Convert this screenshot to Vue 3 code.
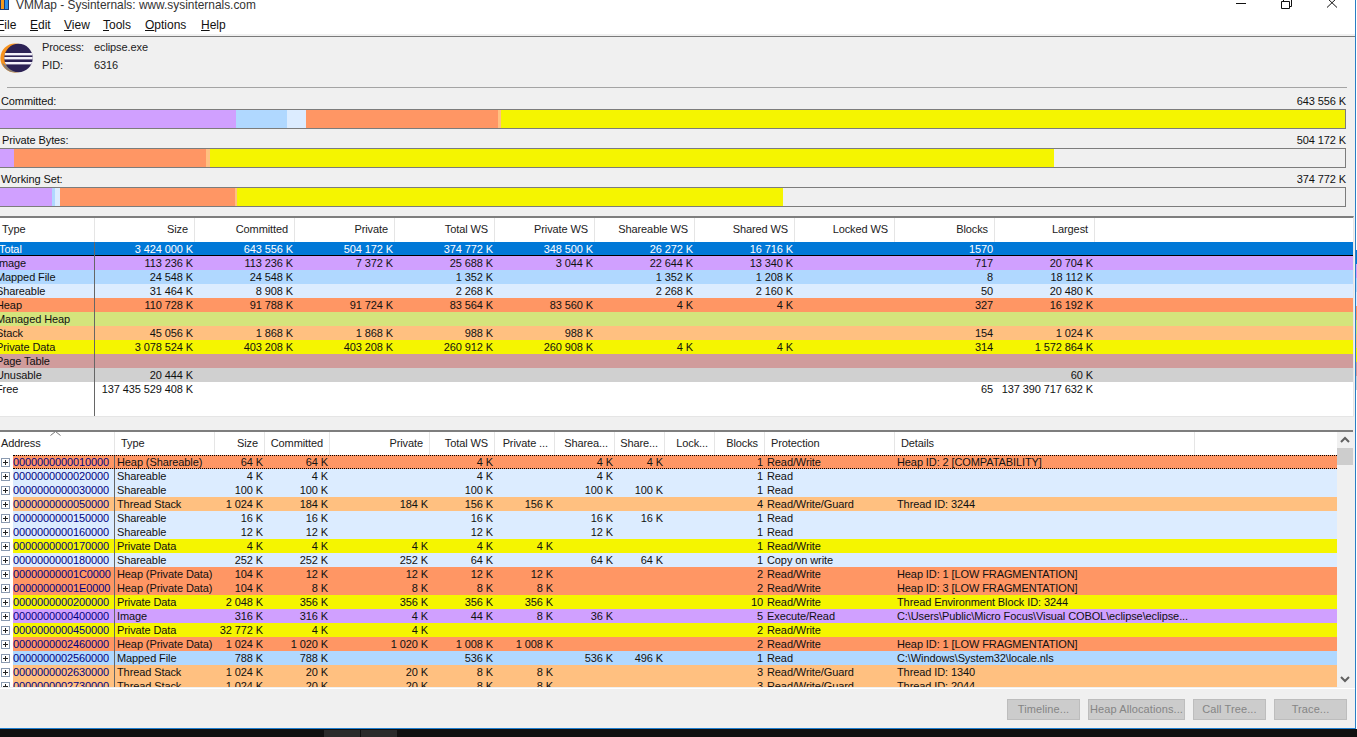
<script setup>
const menus = [
  { key: 'F', rest: 'ile' },
  { key: 'E', rest: 'dit' },
  { key: 'V', rest: 'iew' },
  { key: 'T', rest: 'ools' },
  { key: 'O', rest: 'ptions' },
  { key: 'H', rest: 'elp' },
]

const meters = [
  {
    label: 'Committed:', value: '643 556 K', cls: 'lab-a',
    segs: [['image', 236], ['mapped', 51], ['share', 19], ['heap', 192], ['stack', 3], ['data', 844]],
  },
  {
    label: 'Private Bytes:', value: '504 172 K', cls: 'lab-b',
    segs: [['image', 14], ['heap', 192], ['stack', 4], ['data', 844]],
  },
  {
    label: 'Working Set:', value: '374 772 K', cls: 'lab-a',
    segs: [['image', 52], ['mapped', 3], ['share', 5], ['heap', 175], ['stack', 2], ['data', 546]],
  },
]

const summaryHead = ['Size', 'Committed', 'Private', 'Total WS', 'Private WS', 'Shareable WS', 'Shared WS', 'Locked WS', 'Blocks', 'Largest']

const summary = [
  ['total', 'Total', '3 424 000 K', '643 556 K', '504 172 K', '374 772 K', '348 500 K', '26 272 K', '16 716 K', '', '1570', ''],
  ['image', 'Image', '113 236 K', '113 236 K', '7 372 K', '25 688 K', '3 044 K', '22 644 K', '13 340 K', '', '717', '20 704 K'],
  ['mapped', 'Mapped File', '24 548 K', '24 548 K', '', '1 352 K', '', '1 352 K', '1 208 K', '', '8', '18 112 K'],
  ['share', 'Shareable', '31 464 K', '8 908 K', '', '2 268 K', '', '2 268 K', '2 160 K', '', '50', '20 480 K'],
  ['heap', 'Heap', '110 728 K', '91 788 K', '91 724 K', '83 564 K', '83 560 K', '4 K', '4 K', '', '327', '16 192 K'],
  ['managed', 'Managed Heap', '', '', '', '', '', '', '', '', '', ''],
  ['stack', 'Stack', '45 056 K', '1 868 K', '1 868 K', '988 K', '988 K', '', '', '', '154', '1 024 K'],
  ['data', 'Private Data', '3 078 524 K', '403 208 K', '403 208 K', '260 912 K', '260 908 K', '4 K', '4 K', '', '314', '1 572 864 K'],
  ['pagetable', 'Page Table', '', '', '', '', '', '', '', '', '', ''],
  ['unusable', 'Unusable', '20 444 K', '', '', '', '', '', '', '', '', '60 K'],
  ['free', 'Free', '137 435 529 408 K', '', '', '', '', '', '', '', '65', '137 390 717 632 K'],
]

const detailHead = ['Size', 'Committed', 'Private', 'Total WS', 'Private ...', 'Sharea...', 'Share...', 'Lock...', 'Blocks']

const RW = 'Read/Write'
const RWG = 'Read/Write/Guard'
const LF = '[LOW FRAGMENTATION]'
const details = [
  ['heap', '0000000000010000', 'Heap (Shareable)', '64 K', '64 K', '', '4 K', '', '4 K', '4 K', '', '1', RW, 'Heap ID: 2 [COMPATABILITY]'],
  ['share', '0000000000020000', 'Shareable', '4 K', '4 K', '', '4 K', '', '4 K', '', '', '1', 'Read', ''],
  ['share', '0000000000030000', 'Shareable', '100 K', '100 K', '', '100 K', '', '100 K', '100 K', '', '1', 'Read', ''],
  ['stack', '0000000000050000', 'Thread Stack', '1 024 K', '184 K', '184 K', '156 K', '156 K', '', '', '', '4', RWG, 'Thread ID: 3244'],
  ['share', '0000000000150000', 'Shareable', '16 K', '16 K', '', '16 K', '', '16 K', '16 K', '', '1', 'Read', ''],
  ['share', '0000000000160000', 'Shareable', '12 K', '12 K', '', '12 K', '', '12 K', '', '', '1', 'Read', ''],
  ['data', '0000000000170000', 'Private Data', '4 K', '4 K', '4 K', '4 K', '4 K', '', '', '', '1', RW, ''],
  ['share', '0000000000180000', 'Shareable', '252 K', '252 K', '252 K', '64 K', '', '64 K', '64 K', '', '1', 'Copy on write', ''],
  ['heap', '00000000001C0000', 'Heap (Private Data)', '104 K', '12 K', '12 K', '12 K', '12 K', '', '', '', '2', RW, 'Heap ID: 1 ' + LF],
  ['heap', '00000000001E0000', 'Heap (Private Data)', '104 K', '8 K', '8 K', '8 K', '8 K', '', '', '', '2', RW, 'Heap ID: 3 ' + LF],
  ['data', '0000000000200000', 'Private Data', '2 048 K', '356 K', '356 K', '356 K', '356 K', '', '', '', '10', RW, 'Thread Environment Block ID: 3244'],
  ['image', '0000000000400000', 'Image', '316 K', '316 K', '4 K', '44 K', '8 K', '36 K', '', '', '5', 'Execute/Read', 'C:\\Users\\Public\\Micro Focus\\Visual COBOL\\eclipse\\eclipse...'],
  ['data', '0000000000450000', 'Private Data', '32 772 K', '4 K', '4 K', '', '', '', '', '', '2', RW, ''],
  ['heap', '0000000002460000', 'Heap (Private Data)', '1 024 K', '1 020 K', '1 020 K', '1 008 K', '1 008 K', '', '', '', '2', RW, 'Heap ID: 1 ' + LF],
  ['mapped', '0000000002560000', 'Mapped File', '788 K', '788 K', '', '536 K', '', '536 K', '496 K', '', '1', 'Read', 'C:\\Windows\\System32\\locale.nls'],
  ['stack', '0000000002630000', 'Thread Stack', '1 024 K', '20 K', '20 K', '8 K', '8 K', '', '', '', '3', RWG, 'Thread ID: 1340'],
  ['stack', '0000000002730000', 'Thread Stack', '1 024 K', '20 K', '20 K', '8 K', '8 K', '', '', '', '3', RWG, 'Thread ID: 2044'],
]

const actions = [
  { label: 'Timeline...', cls: 'w73' },
  { label: 'Heap Allocations...', cls: 'w97' },
  { label: 'Call Tree...', cls: 'w73' },
  { label: 'Trace...', cls: 'w73' },
]
</script>

<template>
  <div class="screen">
    <div class="upper">
      <div class="window">
        <header class="titlebar">
          <div class="caption">
            <svg class="app-icon" width="10" height="11" viewBox="0 0 10 11">
              <rect x="0" y="-1" width="9" height="11" fill="#1d3c78" />
              <rect x="1" y="0" width="3" height="9" fill="#f79a1c" />
              <rect x="5" y="0" width="3" height="9" fill="#2f8fe8" />
            </svg>
            <span class="caption-text">VMMap - Sysinternals: www.sysinternals.com</span>
            <div class="controls">
              <svg width="101" height="11" viewBox="0 0 101 11" fill="none" stroke="#111" stroke-width="1">
                <path d="M0 3.5H10" />
                <path d="M45.5 1.5H53.5V8.5H45.5ZM47.5 1.5V-1.5H55.5V6.5H53.5" />
                <path d="M91 -2L101 7.5M101 -2L91 7.5" />
              </svg>
            </div>
          </div>
          <nav class="menubar">
            <span v-for="m in menus" :key="m.key" class="menu-item"><u>{{ m.key }}</u>{{ m.rest }}</span>
          </nav>
        </header>

        <section class="process">
          <svg class="eclipse" width="34" height="30" viewBox="0 0 34 30">
            <defs>
              <clipPath id="globe"><circle cx="18.5" cy="15" r="14.2" /></clipPath>
            </defs>
            <circle cx="15" cy="15" r="14.6" fill="#f6921e" />
            <path d="M2 20A14.6 14.6 0 0 0 15 29.6L18 29Z" fill="#8a8078" />
            <circle cx="18.5" cy="15" r="14.2" fill="#2c2255" />
            <g clip-path="url(#globe)" fill="#f4f2fa">
              <rect x="0" y="10" width="34" height="2.4" />
              <rect x="0" y="14" width="34" height="2.4" />
              <rect x="0" y="19" width="34" height="2.4" />
            </g>
          </svg>
          <div class="proc-grid">
            <span>Process:</span><span>eclipse.exe</span>
            <span>PID:</span><span>6316</span>
          </div>
        </section>
        <div class="divider"></div>

        <section class="meters">
          <div v-for="meter in meters" :key="meter.label" class="meter">
            <div class="meter-head">
              <span :class="meter.cls">{{ meter.label }}</span>
              <span>{{ meter.value }}</span>
            </div>
            <div class="meter-bar">
              <div
                v-for="(s, i) in meter.segs"
                :key="i"
                :class="s[0]"
                :style="{ width: s[1] + 'px' }"
              ></div>
            </div>
          </div>
        </section>

        <section class="summary">
          <div class="sum-grid sum-head">
            <div class="hcell left first">Type</div>
            <div v-for="h in summaryHead" :key="h" class="hcell">{{ h }}</div>
          </div>
          <div v-for="row in summary" :key="row[1]" class="sum-grid sum-row" :class="row[0]">
            <div class="cell first-cell"><span class="clipped">{{ row[1] }}</span></div>
            <div v-for="(v, i) in row.slice(2)" :key="i" class="cell num">{{ v }}</div>
          </div>
          <div class="sum-fill"><div class="sum-fill-line"></div></div>
        </section>

        <div class="splitter"></div>

        <section class="detail">
          <div class="detail-main">
            <div class="det-grid det-head">
              <div class="hcell left addr-head">
                Address
                <svg class="sort" width="11" height="5" viewBox="0 0 11 5" fill="none" stroke="#777"><path d="M.5 4.5L5.5 .5L10.5 4.5" /></svg>
              </div>
              <div class="hcell left pad">Type</div>
              <div v-for="h in detailHead" :key="h" class="hcell">{{ h }}</div>
              <div class="hcell left pad">Protection</div>
              <div class="hcell left pad">Details</div>
            </div>
            <div class="det-rows">
              <div
                v-for="(row, r) in details"
                :key="row[1]"
                class="det-grid det-row"
                :class="[row[0], { focused: r === 0 }]"
              >
                <div class="addr-cell">
                  <div class="gutter">
                    <svg width="9" height="9" viewBox="0 0 9 9" fill="none">
                      <rect x=".5" y=".5" width="8" height="8" stroke="#8a9ab0" fill="#fff" />
                      <path d="M2 4.5H7M4.5 2V7" stroke="#222" />
                    </svg>
                  </div>
                  <span class="addr">{{ row[1] }}</span>
                </div>
                <div class="cell text">{{ row[2] }}</div>
                <div v-for="i in 9" :key="i" class="cell num">{{ row[2 + i] }}</div>
                <div class="cell text">{{ row[12] }}</div>
                <div class="cell text">{{ row[13] }}</div>
              </div>
            </div>
          </div>
          <div class="scrollbar">
            <svg width="16" height="16" viewBox="0 0 16 16" fill="none" stroke="#606060" stroke-width="2"><path d="M4 10L8 6L12 10" /></svg>
            <div class="thumb"></div>
            <div class="track"></div>
            <svg width="16" height="16" viewBox="0 0 16 16" fill="none" stroke="#606060" stroke-width="2"><path d="M4 6L8 10L12 6" /></svg>
          </div>
        </section>

        <footer class="actions">
          <div v-for="a in actions" :key="a.label" class="action" :class="a.cls">{{ a.label }}</div>
        </footer>
      </div>
      <div class="behind"></div>
    </div>
    <div class="taskbar">
      <div class="task-gap"></div>
      <div class="task-btn"></div>
      <div class="task-btn"></div>
    </div>
  </div>
</template>

<style scoped>
.screen {
  width: 1357px;
  height: 737px;
  overflow: hidden;
  display: flex;
  flex-direction: column;
  font-family: "Liberation Sans", Arial, sans-serif;
  font-size: 11px;
  letter-spacing: -0.1px;
  color: #111;
  background: #fff;
}
.upper {
  display: flex;
  height: 729px;
  flex: none;
}
.window {
  width: 1356px;
  height: 729px;
  box-sizing: border-box;
  flex: none;
  background: #f0f0f0;
  border-right: 1px solid #2a7fc4;
  border-bottom: 1px solid #1f7fd0;
  display: flex;
  flex-direction: column;
  overflow: hidden;
}
.behind {
  width: 1px;
  height: 729px;
  background: linear-gradient(to bottom,
    #fff 0, #fff 250px,
    #0078d7 250px, #0078d7 264px,
    #d0a0ff 264px, #d0a0ff 278px,
    #b0d8ff 278px, #b0d8ff 292px,
    #dcecff 292px, #dcecff 306px,
    #ff9664 306px, #ff9664 320px,
    #d4e47c 320px, #d4e47c 334px,
    #ffc080 334px, #ffc080 348px,
    #f5f500 348px, #f5f500 362px,
    #d09c9c 362px, #d09c9c 376px,
    #d0d0d0 376px, #d0d0d0 390px,
    #fff 390px);
}

/* title */
.titlebar {
  height: 34px;
  flex: none;
  background: #fff;
}
.caption {
  height: 16px;
  display: flex;
  align-items: flex-start;
  overflow: hidden;
}
.app-icon {
  flex: none;
  margin-right: 6px;
}
.caption-text {
  font-size: 11.9px;
  letter-spacing: 0;
  line-height: 11px;
  color: #333;
}
.controls {
  margin-left: auto;
  margin-right: 18px;
  height: 11px;
}
.controls svg {
  display: block;
  overflow: visible;
}
.menubar {
  height: 18px;
  line-height: 18px;
  display: flex;
  margin-left: -3px;
  font-size: 12px;
  letter-spacing: 0;
}
.menu-item {
  margin-right: 11px;
}
.menu-item:nth-child(1) { width: 22px; margin-right: 11px; }
.menu-item:nth-child(2) { width: 23px; margin-right: 11px; }
.menu-item:nth-child(3) { width: 28px; margin-right: 11px; }
.menu-item:nth-child(4) { width: 31px; margin-right: 11px; }
.menu-item:nth-child(5) { width: 45px; margin-right: 11px; }

/* process */
.process {
  height: 50px;
  flex: none;
  margin-top: 2px;
  border-top: 1px solid #7a7a7a;
  display: flex;
  box-sizing: content-box;
}
.eclipse {
  flex: none;
  margin: 6px 0 0 0;
}
.proc-grid {
  margin: 1px 0 0 8px;
  display: grid;
  grid-template-columns: 52px auto;
  grid-auto-rows: 18px;
  line-height: 18px;
  color: #222;
}
.divider {
  height: 1px;
  flex: none;
  margin: 0 8px 0 7px;
  background: #a4a4a4;
}

/* meters */
.meters {
  height: 128px;
  flex: none;
  padding-top: 6px;
  box-sizing: border-box;
}
.meter {
  margin-bottom: 4px;
  width: 1346px;
}
.meter-head {
  height: 15px;
  line-height: 15px;
  display: flex;
  justify-content: space-between;
}
.lab-a { margin-left: 1px; }
.lab-b { margin-left: 2px; }
.meter-bar {
  height: 20px;
  box-sizing: border-box;
  border: 1px solid #7c7c7c;
  border-left: none;
  display: flex;
}

/* colors */
.image { background: #d0a0ff; }
.mapped { background: #b0d8ff; }
.share { background: #dcecff; }
.heap { background: #ff9664; }
.managed { background: #d4e47c; }
.stack { background: #ffc080; }
.data { background: #f5f500; }
.pagetable { background: #d09c9c; }
.unusable { background: #d0d0d0; }
.free { background: #fff; }
.total { background: #0078d7; color: #fff; }

/* summary table */
.summary {
  flex: none;
  width: 1354px;
  border-top: 2px solid #7e7e7e;
  border-right: 1px solid #e6e6e6;
  box-sizing: border-box;
  background: #fff;
}
.sum-grid {
  display: grid;
  grid-template-columns: 95px repeat(10, 100px) 1fr;
}
.sum-head {
  height: 24px;
  line-height: 23px;
}
.hcell {
  border-right: 1px solid #e5e5e5;
  text-align: right;
  padding-right: 6px;
  white-space: nowrap;
  overflow: hidden;
  color: #222;
}
.hcell.left {
  text-align: left;
  padding-right: 0;
}
.hcell.first {
  padding-left: 2px;
}
.hcell.pad {
  padding-left: 6px;
}
.sum-row {
  height: 14px;
  line-height: 14px;
}
.sum-row.total {
  box-shadow: inset 0 -1px 0 #000;
}
.cell {
  white-space: nowrap;
  overflow: hidden;
  min-width: 0;
}
.cell.num {
  text-align: right;
  padding-right: 2px;
}
.first-cell {
  border-right: 1px solid #666;
}
.clipped {
  display: block;
  margin-left: -4px;
}
.total .clipped {
  margin-left: -1px;
}
.sum-row .cell:nth-child(2) {
  overflow: visible;
}
.sum-fill {
  height: 20px;
  border-bottom: 1px solid #e5e5e5;
}
.sum-fill-line {
  width: 95px;
  height: 100%;
  box-sizing: border-box;
  border-right: 1px solid #666;
}
.splitter {
  height: 13px;
  flex: none;
}

/* detail table */
.detail {
  flex: none;
  height: 257px;
  width: 1353px;
  border-top: 2px solid #7e7e7e;
  box-sizing: border-box;
  display: flex;
  background: #fff;
}
.detail-main {
  width: 1337px;
  flex: none;
  overflow: hidden;
}
.det-grid {
  display: grid;
  grid-template-columns: 115px 100px 50px 65px 100px 65px 60px 60px 50px 50px 50px 130px 300px 1fr;
}
.det-head {
  height: 23px;
  line-height: 23px;
  grid-template-columns: 115px 100px 50px 65px 100px 65px 60px 60px 50px 50px 50px 130px 300px;
}
.addr-head {
  position: relative;
  padding-left: 1px;
  overflow: visible;
}
.sort {
  position: absolute;
  left: 50px;
  top: -1px;
}
.det-rows {
  height: 232px;
  overflow: hidden;
}
.det-row {
  height: 14px;
  line-height: 14px;
  position: relative;
}
.focused::after {
  content: "";
  position: absolute;
  left: 13px;
  right: 0;
  top: 0;
  bottom: 0;
  border-top: 1px dotted #000;
  border-bottom: 1px dotted #000;
  pointer-events: none;
}
.addr-cell {
  display: flex;
  border-right: 1px solid #666;
  min-width: 0;
}
.gutter {
  width: 13px;
  flex: none;
  background: #fff;
  display: flex;
  align-items: center;
  padding-left: 1px;
  box-sizing: border-box;
}
.gutter svg {
  display: block;
}
.addr {
  color: #000080;
  letter-spacing: -0.12px;
}
.cell.text {
  padding-left: 2px;
}
.scrollbar {
  width: 16px;
  flex: none;
  background: #f0f0f0;
  display: flex;
  flex-direction: column;
}
.scrollbar svg {
  flex: none;
  display: block;
}
.thumb {
  height: 17px;
  flex: none;
  background: #cdcdcd;
}
.track {
  flex: 1;
}

/* actions */
.actions {
  flex: none;
  display: flex;
  justify-content: flex-end;
  gap: 8px;
  margin-top: 1px;
  border-top: 1px solid #fff;
  padding: 10px 8px 0 0;
}
.action {
  height: 21px;
  line-height: 19px;
  box-sizing: border-box;
  border: 1px solid #bdbdbd;
  background: #cccccc;
  color: #858585;
  text-align: center;
  white-space: nowrap;
  letter-spacing: 0.1px;
}
.w73 { width: 73px; }
.w97 { width: 97px; }

/* taskbar */
.taskbar {
  height: 8px;
  flex: none;
  background: #101010;
  display: flex;
  align-items: flex-end;
}
.task-gap {
  width: 324px;
}
.task-btn {
  width: 36px;
  height: 7px;
  margin-right: 1px;
  background: #2b2b2b;
}
</style>

<style>
html, body {
  margin: 0;
  background: #fff;
  overflow: hidden;
}
</style>
